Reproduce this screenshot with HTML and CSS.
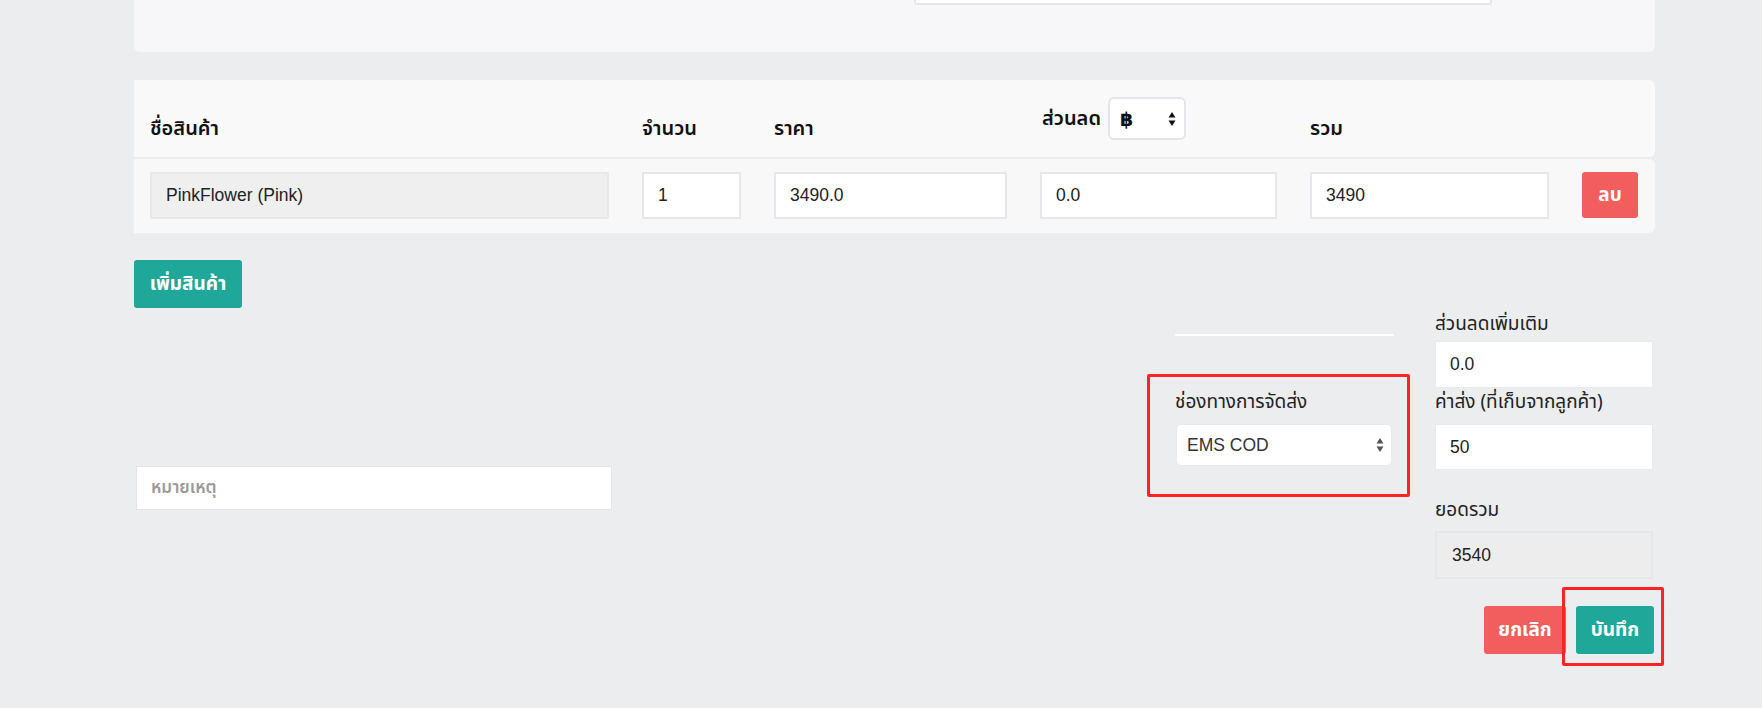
FILE: index.html
```html
<!DOCTYPE html>
<html lang="th">
<head>
<meta charset="utf-8">
<title>Order</title>
<link rel="stylesheet" href="styles.css">
</head>
<body>
<div class="page">
  <div class="content">
    <div class="top-card"><div class="top-field"></div></div>

    <div class="items">
      <div class="items-head grid">
        <div class="th">ชื่อสินค้า</div>
        <div class="th">จำนวน</div>
        <div class="th">ราคา</div>
        <div class="th th-discount">
          <span>ส่วนลด</span>
          <span class="mini-select"><span class="cur">฿</span>
            <svg class="arrows" width="8" height="16" viewBox="0 0 8 16"><path d="M4 1 L7.5 6.5 L0.5 6.5 Z M4 15 L7.5 9.5 L0.5 9.5 Z" fill="#111"/></svg>
          </span>
        </div>
        <div class="th">รวม</div>
        <div></div>
      </div>
      <div class="items-row grid">
        <div class="field readonly">PinkFlower (Pink)</div>
        <div class="field">1</div>
        <div class="field">3490.0</div>
        <div class="field">0.0</div>
        <div class="field">3490</div>
        <button class="btn btn-red btn-del">ลบ</button>
      </div>
    </div>

    <button class="btn btn-teal btn-add">เพิ่มสินค้า</button>

    <div class="summary">
      <div class="notes-col">
        <div class="field notes">หมายเหตุ</div>
      </div>
      <div class="ship-col">
        <div class="rule"></div>
        <div class="label ship-label">ช่องทางการจัดส่ง</div>
        <div class="select">
          <span>EMS COD</span>
          <svg class="arrows" width="8" height="16" viewBox="0 0 8 16"><path d="M4 1 L7.5 6.5 L0.5 6.5 Z M4 15 L7.5 9.5 L0.5 9.5 Z" fill="#555"/></svg>
        </div>
      </div>
      <div class="totals-col">
        <div class="label">ส่วนลดเพิ่มเติม</div>
        <div class="field plain f1">0.0</div>
        <div class="label l2">ค่าส่ง (ที่เก็บจากลูกค้า)</div>
        <div class="field plain f2">50</div>
        <div class="label l3">ยอดรวม</div>
        <div class="field total">3540</div>
        <div class="actions">
          <button class="btn btn-red btn-cancel">ยกเลิก</button>
          <button class="btn btn-teal btn-save">บันทึก</button>
        </div>
      </div>
    </div>
  </div>

  <div class="annot annot-ship"></div>
  <div class="annot annot-save"></div>
</div>
</body>
</html>
```

FILE: styles.css
```css
html, body {
  margin: 0;
  padding: 0;
}
body {
  background: #ecedef;
  font-family: "Liberation Sans", Arial, "Noto Sans Thai", sans-serif;
  color: #222;
}
.page {
  position: relative;
  width: 1762px;
  height: 708px;
  overflow: hidden;
}
.content {
  margin-left: 134px;
  width: 1521px;
}

/* top card */
.top-card {
  height: 52px;
  background: #f7f7f9;
  border-radius: 0 0 6px 6px;
  padding-left: 780px;
  box-sizing: border-box;
}
.top-field {
  width: 578px;
  height: 5px;
  background: #fff;
  border: 2px solid #e6e7ea;
  border-top: 0;
  box-sizing: border-box;
  border-radius: 0 0 3px 3px;
}

/* items table */
.items {
  margin-top: 28px;
}
.grid {
  display: grid;
  grid-template-columns: 459px 99px 233px 237px 239px 56px;
  column-gap: 33px;
  padding-left: 16px;
  box-sizing: border-box;
}
.items-head {
  height: 77px;
  background: #f9f9f9;
  border-radius: 0 6px 6px 0;
  align-items: end;
  padding-bottom: 14px;
}
.th {
  font-family: "Noto Sans Thai", "Noto Sans", "DejaVu Sans", sans-serif;
  font-size: 20px;
  font-weight: 600;
  line-height: 28px;
  color: #111;
}
.th-discount {
  display: flex;
  align-items: center;
  gap: 7px;
  margin-left: 2px;
  padding-bottom: 3px;
}
.mini-select {
  display: flex;
  align-items: center;
  justify-content: space-between;
  width: 78px;
  height: 43px;
  box-sizing: border-box;
  background: #fff;
  border: 2px solid #e3e5e8;
  border-radius: 6px;
  padding: 0 8px 0 10px;
}
.mini-select .cur {
  font-family: "DejaVu Sans", sans-serif;
  font-size: 19px;
  font-weight: 700;
  color: #111;
}
.items-row {
  margin-top: 2px;
  height: 74px;
  background: #f8f8f8;
  border-radius: 0 6px 6px 0;
  padding-top: 13px;
  align-items: start;
}
.field {
  height: 47px;
  box-sizing: border-box;
  border: 2px solid #e5e7ea;
  background: #fff;
  font-size: 17.5px;
  color: #222;
  padding-left: 14px;
  display: flex;
  align-items: center;
}
.field.readonly {
  background: #efefef;
  border-color: #e7e8ea;
  border-radius: 2px;
}

/* buttons */
.btn {
  border: 0;
  margin: 0;
  padding: 0;
  color: #fff;
  font-family: "Noto Sans Thai", "Noto Sans", "DejaVu Sans", sans-serif;
  font-size: 19px;
  font-weight: 700;
  border-radius: 3px;
  cursor: pointer;
}
.btn-red { background: #f25d5d; }
.btn-teal { background: #1fa899; }
.btn-del {
  width: 56px;
  height: 46px;
}
.btn-add {
  display: block;
  margin-top: 27px;
  width: 108px;
  height: 48px;
}

/* summary */
.summary {
  display: flex;
  align-items: flex-start;
  margin-top: 4px;
}
.notes-col {
  width: 478px;
  padding-top: 154px;
}
.field.notes {
  margin-left: 2px;
  width: 476px;
  height: 44px;
  border: 1px solid #e3e5e8;
  padding-left: 14px;
  color: #9a9a9a;
  font-family: "Noto Sans Thai", "Noto Sans", "DejaVu Sans", sans-serif;
  font-size: 17px;
  font-weight: 600;
}
.label {
  font-family: "Noto Sans Thai", "Noto Sans", "DejaVu Sans", sans-serif;
  font-size: 19px;
  line-height: 26px;
  color: #222;
}
.ship-col {
  margin-left: 563px;
  width: 219px;
  display: flex;
  flex-direction: column;
}
.rule {
  margin-top: 22px;
  height: 2px;
  background: #fff;
}
.ship-label {
  margin-top: 54px;
}
.select {
  margin-top: 8px;
  margin-left: 1px;
  width: 216px;
  height: 42px;
  box-sizing: border-box;
  background: #fff;
  border: 1px solid #e8e9ec;
  border-radius: 5px;
  display: flex;
  align-items: center;
  justify-content: space-between;
  padding: 0 7px 0 10px;
  font-size: 17.5px;
  color: #333;
}
.totals-col {
  margin-left: 41px;
  width: 219px;
  display: flex;
  flex-direction: column;
}
.field.plain {
  width: 218px;
  height: 47px;
  border: 1px solid #e9eaec;
  padding-left: 14px;
  margin-top: 3px;
}
.field.f2 {
  margin-top: 8px;
  height: 46px;
}
.l2 { margin-top: 2px; }
.l3 { margin-top: 28px; }
.field.total {
  width: 218px;
  height: 48px;
  margin-top: 7px;
  background: #ededed;
  border: 2px solid #e6e7e9;
  padding-left: 15px;
}
.actions {
  margin-top: 27px;
  display: flex;
  justify-content: flex-end;
  gap: 10px;
}
.btn-cancel {
  width: 82px;
  height: 48px;
}
.btn-save {
  width: 78px;
  height: 48px;
}

/* annotation boxes */
.annot {
  position: absolute;
  border: 3px solid #ff2323;
  border-radius: 2px;
  box-sizing: border-box;
}
.annot-ship {
  left: 1147px;
  top: 374px;
  width: 263px;
  height: 123px;
}
.annot-save {
  left: 1562px;
  top: 587px;
  width: 102px;
  height: 79px;
}
```
